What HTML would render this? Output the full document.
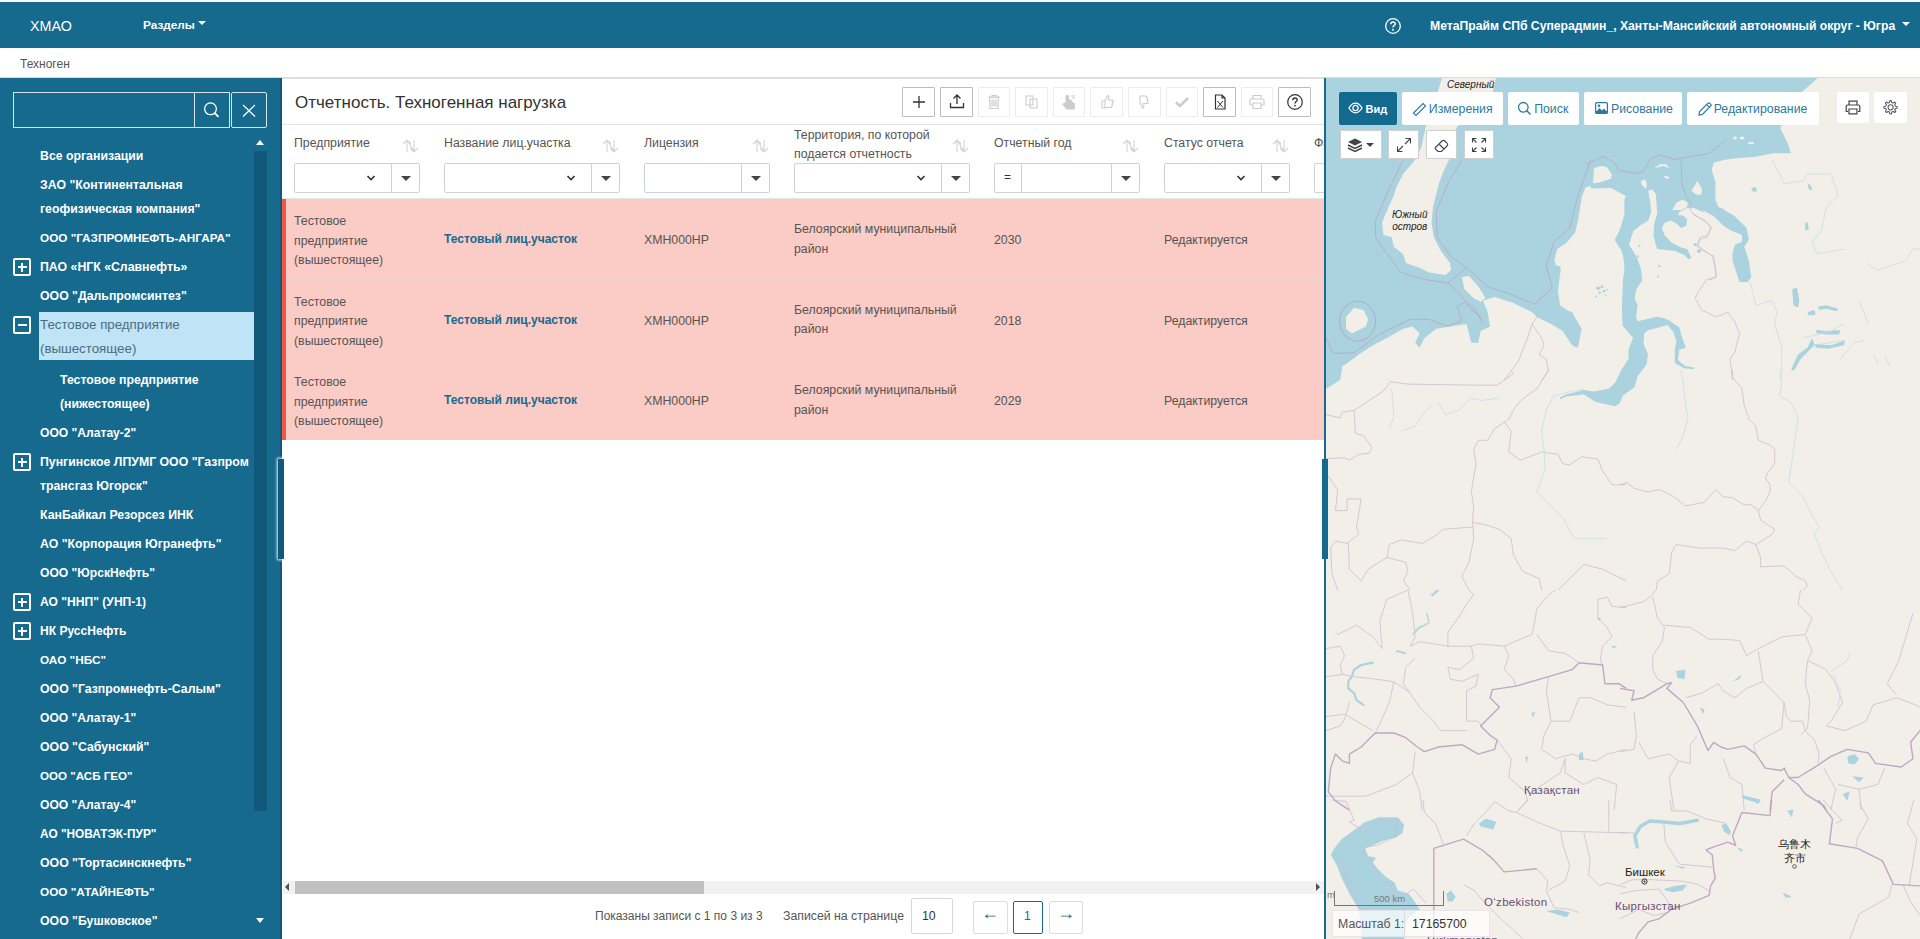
<!DOCTYPE html>
<html><head><meta charset="utf-8">
<style>
*{box-sizing:border-box;margin:0;padding:0}
html,body{width:1920px;height:939px;overflow:hidden;background:#fff;font-family:"Liberation Sans",sans-serif;color:#333}
.abs{position:absolute}
#nav{position:absolute;left:0;top:2px;width:1920px;height:46px;background:#156a8e;color:#fff}
#crumb{position:absolute;left:0;top:48px;width:1920px;height:30px;background:#fff;border-bottom:1px solid #dcdcdc}
#side{position:absolute;left:0;top:78px;width:282px;height:861px;background:#156a8e}
#main{position:absolute;left:282px;top:78px;width:1042px;height:861px;background:#fff;border-top:1px solid #e0e0e0;overflow:hidden}
#vline{position:absolute;left:1324px;top:78px;width:2px;height:861px;background:#156a8e}
#map{position:absolute;left:1326px;top:78px;width:594px;height:861px;background:#f2efe9;overflow:hidden}
.ti{position:absolute;color:#fff;font-weight:700;font-size:12.3px;line-height:24px;white-space:nowrap}
.pm{position:absolute;left:13px;width:18px;height:18px;border:2px solid #fff;border-radius:2px}
.pm:before{content:"";position:absolute;left:2.5px;top:6px;width:9px;height:2px;background:#fff}
.pm.plus:after{content:"";position:absolute;left:6px;top:2.5px;width:2px;height:9px;background:#fff}
</style></head><body>
<div id="nav">
  <div class="abs" style="left:30px;top:16px;font-size:14.3px;line-height:17px">ХМАО</div>
  <div class="abs" style="left:143px;top:16px;font-size:11.8px;font-weight:700;line-height:14px">Разделы</div>
  <div class="abs" style="left:198px;top:19px;width:0;height:0;border-left:4px solid transparent;border-right:4px solid transparent;border-top:4px solid #fff"></div>
  <svg class="abs" style="left:1384px;top:15px" width="18" height="18" viewBox="0 0 18 18"><circle cx="9" cy="9" r="7.3" fill="none" stroke="#fff" stroke-width="1.3"/><path d="M6.8 7.2C6.8 5.8 7.8 5 9 5C10.3 5 11.2 5.8 11.2 6.9C11.2 8.5 9 8.6 9 10.4" stroke="#fff" stroke-width="1.5" fill="none"/><circle cx="9" cy="12.7" r="1" fill="#fff"/></svg>
  <div class="abs" style="left:1430px;top:17px;font-size:12.2px;font-weight:700;line-height:14px;white-space:nowrap">МетаПрайм СПб Суперадмин_, Ханты-Мансийский автономный округ - Югра</div>
  <div class="abs" style="left:1902px;top:20px;width:0;height:0;border-left:4px solid transparent;border-right:4px solid transparent;border-top:4px solid #fff"></div>
</div>
<div id="crumb"><div class="abs" style="left:20px;top:9px;font-size:12px;color:#555">Техноген</div></div>
<div id="side">
<div class="abs" style="left:13px;top:14px;width:182px;height:36px;border:1px solid #d8e4ea;border-right:none"></div>
<div class="abs" style="left:194px;top:14px;width:36px;height:36px;border:1px solid #d8e4ea"></div>
<svg class="abs" style="left:202px;top:22px" width="20" height="20" viewBox="0 0 20 20"><circle cx="8.5" cy="8.8" r="5.9" fill="none" stroke="#fff" stroke-width="1.3"/><line x1="12.6" y1="12.9" x2="16.5" y2="16.8" stroke="#fff" stroke-width="1.8"/></svg>
<div class="abs" style="left:231px;top:14px;width:36px;height:36px;border:1px solid #d8e4ea;border-radius:2px"></div>
<svg class="abs" style="left:239px;top:22px" width="20" height="20" viewBox="0 0 20 20"><path d="M4 5L16 16.5M16 5L4 16.5" stroke="#fff" stroke-width="1.2"/></svg>
<div class="abs" style="left:254px;top:73px;width:13px;height:660px;background:#12587a"></div>
<div class="abs" style="left:256px;top:62px;width:0;height:0;border-left:4px solid transparent;border-right:4px solid transparent;border-bottom:5px solid #fff"></div>
<div class="abs" style="left:256px;top:840px;width:0;height:0;border-left:4px solid transparent;border-right:4px solid transparent;border-top:5px solid #fff"></div>
<div class="abs" style="left:280px;top:0;width:2px;height:861px;background:#11587a"></div>
<div class="ti" style="left:40px;top:66px">Все организации</div>
<div class="ti" style="left:40px;top:95px">ЗАО "Континентальная<br>геофизическая компания"</div>
<div class="ti" style="left:40px;top:148px;font-size:11.74px">ООО "ГАЗПРОМНЕФТЬ-АНГАРА"</div>
<div class="ti" style="left:40px;top:177px">ПАО «НГК «Славнефть»</div>
<div class="pm plus" style="top:180px"></div>
<div class="ti" style="left:40px;top:206px">ООО "Дальпромсинтез"</div>
<div class="abs" style="left:39px;top:234px;width:215px;height:48px;background:#bfe4f5"></div>
<div class="ti" style="left:40px;top:235px;font-weight:400;font-size:13.3px;color:#4d6d80">Тестовое предприятие<br>(вышестоящее)</div>
<div class="pm minus" style="top:238px"></div>
<div class="ti" style="left:60px;top:290px">Тестовое предприятие<br>(нижестоящее)</div>
<div class="ti" style="left:40px;top:343px;font-size:12.1px">ООО "Алатау-2"</div>
<div class="ti" style="left:40px;top:372px">Пунгинское ЛПУМГ ООО "Газпром<br>трансгаз Югорск"</div>
<div class="pm plus" style="top:375px"></div>
<div class="ti" style="left:40px;top:425px">КанБайкал Резорсез ИНК</div>
<div class="ti" style="left:40px;top:454px">АО "Корпорация Югранефть"</div>
<div class="ti" style="left:40px;top:483px;font-size:12.1px">ООО "ЮрскНефть"</div>
<div class="ti" style="left:40px;top:512px;font-size:12.1px">АО "ННП" (УНП-1)</div>
<div class="pm plus" style="top:515px"></div>
<div class="ti" style="left:40px;top:541px;font-size:12.05px">НК РуссНефть</div>
<div class="pm plus" style="top:544px"></div>
<div class="ti" style="left:40px;top:570px;font-size:11.75px">ОАО "НБС"</div>
<div class="ti" style="left:40px;top:599px">ООО "Газпромнефть-Салым"</div>
<div class="ti" style="left:40px;top:628px;font-size:12.1px">ООО "Алатау-1"</div>
<div class="ti" style="left:40px;top:657px">ООО "Сабунский"</div>
<div class="ti" style="left:40px;top:686px;font-size:11.6px">ООО "АСБ ГЕО"</div>
<div class="ti" style="left:40px;top:715px;font-size:12.1px">ООО "Алатау-4"</div>
<div class="ti" style="left:40px;top:744px;font-size:11.85px">АО "НОВАТЭК-ПУР"</div>
<div class="ti" style="left:40px;top:773px">ООО "Тортасинскнефть"</div>
<div class="ti" style="left:40px;top:802px;font-size:11.75px">ООО "АТАЙНЕФТЬ"</div>
<div class="ti" style="left:40px;top:831px">ООО "Бушковское"</div>
</div>
<div id="main">
<div class="abs" style="left:13px;top:14px;font-size:17px;color:#333;white-space:nowrap">Отчетность. Техногенная нагрузка</div>
<div class="abs" style="left:620px;top:8px;width:33px;height:30px;border:1px solid #bdbdbd;border-radius:1px"></div>
<svg class="abs" style="left:626.5px;top:13px" width="20" height="20" viewBox="0 0 20 20"><path d="M10 4V16M4 10H16" stroke="#333" stroke-width="1.3" fill="none"/></svg>
<div class="abs" style="left:658px;top:8px;width:33px;height:30px;border:1px solid #bdbdbd;border-radius:1px"></div>
<svg class="abs" style="left:664.5px;top:13px" width="20" height="20" viewBox="0 0 20 20"><path d="M10 3V12M6.5 6.5L10 3L13.5 6.5M3.5 11V15.5H16.5V11" stroke="#333" stroke-width="1.3" fill="none"/></svg>
<div class="abs" style="left:696px;top:8px;width:32px;height:30px;border:1px solid #ececec;border-radius:1px"></div>
<svg class="abs" style="left:702.0px;top:13px" width="20" height="20" viewBox="0 0 20 20"><path d="M4 5H16M8 5V3.5H12V5M5.5 5.5L6 16.5H14L14.5 5.5Z M8 7.5V14.5M10 7.5V14.5M12 7.5V14.5" stroke="#cccccc" stroke-width="1.2" fill="none"/></svg>
<div class="abs" style="left:733px;top:8px;width:33px;height:30px;border:1px solid #ececec;border-radius:1px"></div>
<svg class="abs" style="left:739.5px;top:13px" width="20" height="20" viewBox="0 0 20 20"><path d="M4 4H11V13H4Z M8 7H15V16H8Z" stroke="#cccccc" stroke-width="1.1" fill="#fff"/></svg>
<div class="abs" style="left:771px;top:8px;width:32px;height:30px;border:1px solid #ececec;border-radius:1px"></div>
<svg class="abs" style="left:777.0px;top:13px" width="20" height="20" viewBox="0 0 20 20"><path d="M7 9V4.5a1.3 1.3 0 0 1 2.6 0V11l1-3 1.5 0.2 0.3 1.5 1.2 0.2 0.4 1.3 1.3 0.3V17H8L4 12.5l1.3-1.5L7 12Z M12 4H16M13 6H16" stroke="#cccccc" stroke-width="1.1" fill="#cccccc"/></svg>
<div class="abs" style="left:808px;top:8px;width:33px;height:30px;border:1px solid #ececec;border-radius:1px"></div>
<svg class="abs" style="left:814.5px;top:13px" width="20" height="20" viewBox="0 0 20 20"><path d="M5 9H8V16H5Z M8 9L10.5 3.5C12 3.5 12.3 5 11.5 8H15.5C16.5 8.3 16.3 9.5 15.5 10C16.3 10.5 16 11.6 15.2 12C15.8 12.5 15.4 13.6 14.8 13.8C15 14.8 14.3 15.5 13.5 15.5H8" stroke="#cccccc" stroke-width="1.1" fill="none"/></svg>
<div class="abs" style="left:846px;top:8px;width:33px;height:30px;border:1px solid #ececec;border-radius:1px"></div>
<svg class="abs" style="left:852.5px;top:13px" width="20" height="20" viewBox="0 0 20 20"><path d="M8 4H13.5C14.3 4 15 4.7 14.8 5.7C15.4 6 15.8 7 15.2 7.5C16 8 16.3 9 15.5 9.5C16.3 10 16.5 11.2 15.5 11.5H11.5C12.3 14.5 12 16 10.5 16L8 10.5Z" stroke="#cccccc" stroke-width="1.1" fill="none" transform="translate(-3 0)"/></svg>
<div class="abs" style="left:884px;top:8px;width:32px;height:30px;border:1px solid #ececec;border-radius:1px"></div>
<svg class="abs" style="left:890.0px;top:13px" width="20" height="20" viewBox="0 0 20 20"><path d="M4 10.5L8 14L16 6" stroke="#cccccc" stroke-width="2.6" fill="none"/></svg>
<div class="abs" style="left:921px;top:8px;width:33px;height:30px;border:1px solid #bdbdbd;border-radius:1px"></div>
<svg class="abs" style="left:927.5px;top:13px" width="20" height="20" viewBox="0 0 20 20"><path d="M5.5 3H12L15 6V17H5.5Z M12 3V6H15" stroke="#333" stroke-width="1.2" fill="none"/><path d="M7.5 9L13 15.5M13 9L7.5 15.5" stroke="#333" stroke-width="1" fill="none"/></svg>
<div class="abs" style="left:959px;top:8px;width:32px;height:30px;border:1px solid #ececec;border-radius:1px"></div>
<svg class="abs" style="left:965.0px;top:13px" width="20" height="20" viewBox="0 0 20 20"><path d="M6 7V3.5H14V7 M4.5 7H15.5C16.5 7 17 7.6 17 8.5V13H14 M6 13H3V8.5C3 7.6 3.5 7 4.5 7 M6 11H14V16.5H6Z" stroke="#cccccc" stroke-width="1.2" fill="none"/></svg>
<div class="abs" style="left:996px;top:8px;width:33px;height:30px;border:1px solid #bdbdbd;border-radius:1px"></div>
<svg class="abs" style="left:1002.5px;top:13px" width="20" height="20" viewBox="0 0 20 20"><circle cx="10" cy="10" r="7.3" stroke="#333" stroke-width="1.2" fill="none"/><path d="M7.8 8.2C7.8 6.8 8.8 6 10 6C11.3 6 12.2 6.8 12.2 7.9C12.2 9.5 10 9.6 10 11.5" stroke="#333" stroke-width="1.4" fill="none"/><circle cx="10" cy="13.6" r="0.9" fill="#333"/></svg>
<div class="abs" style="left:0px;top:45px;width:1042px;height:1px;background:#e3e3e3"></div>
<div class="abs" style="left:12px;top:57px;font-size:12.3px;line-height:14px;color:#555;white-space:nowrap">Предприятие</div>
<div class="abs" style="left:119px;top:60px"><svg width="20" height="14" viewBox="0 0 20 14"><path d="M2 5L6 1L10 5M6 1V13M6.5 1.5L13 12.5M13 1V13M9 9L13 13L17 9" stroke="#d4d4d4" stroke-width="1.1" fill="none"/></svg></div>
<div class="abs" style="left:12px;top:84px;width:126px;height:30px;border:1px solid #d2d2d2;border-radius:2px;background:#fff"></div>
<div class="abs" style="left:109px;top:84px;width:1px;height:30px;background:#d2d2d2"></div>
<div class="abs" style="left:119px;top:97px;width:0;height:0;border-left:5px solid transparent;border-right:5px solid transparent;border-top:5px solid #444"></div>
<svg class="abs" style="left:84px;top:95px" width="10" height="8" viewBox="0 0 10 8"><path d="M1.5 2L5 5.5L8.5 2" stroke="#333" stroke-width="1.6" fill="none"/></svg>
<div class="abs" style="left:162px;top:57px;font-size:12.3px;line-height:14px;color:#555;white-space:nowrap">Название лиц.участка</div>
<div class="abs" style="left:319px;top:60px"><svg width="20" height="14" viewBox="0 0 20 14"><path d="M2 5L6 1L10 5M6 1V13M6.5 1.5L13 12.5M13 1V13M9 9L13 13L17 9" stroke="#d4d4d4" stroke-width="1.1" fill="none"/></svg></div>
<div class="abs" style="left:162px;top:84px;width:176px;height:30px;border:1px solid #d2d2d2;border-radius:2px;background:#fff"></div>
<div class="abs" style="left:309px;top:84px;width:1px;height:30px;background:#d2d2d2"></div>
<div class="abs" style="left:319px;top:97px;width:0;height:0;border-left:5px solid transparent;border-right:5px solid transparent;border-top:5px solid #444"></div>
<svg class="abs" style="left:284px;top:95px" width="10" height="8" viewBox="0 0 10 8"><path d="M1.5 2L5 5.5L8.5 2" stroke="#333" stroke-width="1.6" fill="none"/></svg>
<div class="abs" style="left:362px;top:57px;font-size:12.3px;line-height:14px;color:#555;white-space:nowrap">Лицензия</div>
<div class="abs" style="left:469px;top:60px"><svg width="20" height="14" viewBox="0 0 20 14"><path d="M2 5L6 1L10 5M6 1V13M6.5 1.5L13 12.5M13 1V13M9 9L13 13L17 9" stroke="#d4d4d4" stroke-width="1.1" fill="none"/></svg></div>
<div class="abs" style="left:362px;top:84px;width:126px;height:30px;border:1px solid #cdd3d8;border-radius:2px;background:#fff"></div>
<div class="abs" style="left:459px;top:84px;width:1px;height:30px;background:#d2d2d2"></div>
<div class="abs" style="left:469px;top:97px;width:0;height:0;border-left:5px solid transparent;border-right:5px solid transparent;border-top:5px solid #444"></div>
<div class="abs" style="left:512px;top:47px;font-size:12.3px;line-height:18.5px;color:#555;white-space:nowrap">Территория, по которой<br>подается отчетность</div>
<div class="abs" style="left:669px;top:60px"><svg width="20" height="14" viewBox="0 0 20 14"><path d="M2 5L6 1L10 5M6 1V13M6.5 1.5L13 12.5M13 1V13M9 9L13 13L17 9" stroke="#d4d4d4" stroke-width="1.1" fill="none"/></svg></div>
<div class="abs" style="left:512px;top:84px;width:176px;height:30px;border:1px solid #d2d2d2;border-radius:2px;background:#fff"></div>
<div class="abs" style="left:659px;top:84px;width:1px;height:30px;background:#d2d2d2"></div>
<div class="abs" style="left:669px;top:97px;width:0;height:0;border-left:5px solid transparent;border-right:5px solid transparent;border-top:5px solid #444"></div>
<svg class="abs" style="left:634px;top:95px" width="10" height="8" viewBox="0 0 10 8"><path d="M1.5 2L5 5.5L8.5 2" stroke="#333" stroke-width="1.6" fill="none"/></svg>
<div class="abs" style="left:712px;top:57px;font-size:12.3px;line-height:14px;color:#555;white-space:nowrap">Отчетный год</div>
<div class="abs" style="left:839px;top:60px"><svg width="20" height="14" viewBox="0 0 20 14"><path d="M2 5L6 1L10 5M6 1V13M6.5 1.5L13 12.5M13 1V13M9 9L13 13L17 9" stroke="#d4d4d4" stroke-width="1.1" fill="none"/></svg></div>
<div class="abs" style="left:712px;top:84px;width:146px;height:30px;border:1px solid #d2d2d2;border-radius:2px;background:#fff"></div>
<div class="abs" style="left:829px;top:84px;width:1px;height:30px;background:#d2d2d2"></div>
<div class="abs" style="left:839px;top:97px;width:0;height:0;border-left:5px solid transparent;border-right:5px solid transparent;border-top:5px solid #444"></div>
<div class="abs" style="left:739px;top:84px;width:1px;height:30px;background:#d2d2d2"></div>
<div class="abs" style="left:722px;top:91px;font-size:12px;color:#333">=</div>
<div class="abs" style="left:882px;top:57px;font-size:12.3px;line-height:14px;color:#555;white-space:nowrap">Статус отчета</div>
<div class="abs" style="left:989px;top:60px"><svg width="20" height="14" viewBox="0 0 20 14"><path d="M2 5L6 1L10 5M6 1V13M6.5 1.5L13 12.5M13 1V13M9 9L13 13L17 9" stroke="#d4d4d4" stroke-width="1.1" fill="none"/></svg></div>
<div class="abs" style="left:882px;top:84px;width:126px;height:30px;border:1px solid #d2d2d2;border-radius:2px;background:#fff"></div>
<div class="abs" style="left:979px;top:84px;width:1px;height:30px;background:#d2d2d2"></div>
<div class="abs" style="left:989px;top:97px;width:0;height:0;border-left:5px solid transparent;border-right:5px solid transparent;border-top:5px solid #444"></div>
<svg class="abs" style="left:954px;top:95px" width="10" height="8" viewBox="0 0 10 8"><path d="M1.5 2L5 5.5L8.5 2" stroke="#333" stroke-width="1.6" fill="none"/></svg>
<div class="abs" style="left:1032px;top:57px;font-size:12.3px;line-height:14px;color:#555;white-space:nowrap">Фа</div>
<div class="abs" style="left:1139px;top:60px"><svg width="20" height="14" viewBox="0 0 20 14"><path d="M2 5L6 1L10 5M6 1V13M6.5 1.5L13 12.5M13 1V13M9 9L13 13L17 9" stroke="#d4d4d4" stroke-width="1.1" fill="none"/></svg></div>
<div class="abs" style="left:1032px;top:84px;width:126px;height:30px;border:1px solid #d2d2d2;border-radius:2px;background:#fff"></div>
<div class="abs" style="left:1129px;top:84px;width:1px;height:30px;background:#d2d2d2"></div>
<div class="abs" style="left:1139px;top:97px;width:0;height:0;border-left:5px solid transparent;border-right:5px solid transparent;border-top:5px solid #444"></div>
<svg class="abs" style="left:1104px;top:95px" width="10" height="8" viewBox="0 0 10 8"><path d="M1.5 2L5 5.5L8.5 2" stroke="#333" stroke-width="1.6" fill="none"/></svg>
<div class="abs" style="left:0px;top:120px;width:1042px;height:80px;background:#fbcbc5"></div>
<div class="abs" style="left:0px;top:120px;width:4px;height:80px;background:#f0574a"></div>
<div class="abs" style="left:4px;top:199px;width:1038px;height:1px;background:#e9d6d4"></div>
<div class="abs" style="left:12px;top:133px;font-size:12.3px;line-height:19.7px;color:#555;white-space:nowrap">Тестовое<br>предприятие<br>(вышестоящее)</div>
<div class="abs" style="left:162px;top:152px;font-size:12px;font-weight:700;line-height:16px;color:#176a8f;white-space:nowrap">Тестовый лиц.участок</div>
<div class="abs" style="left:362px;top:153px;font-size:12.3px;line-height:16px;color:#555;white-space:nowrap">ХМН000НР</div>
<div class="abs" style="left:512px;top:141px;font-size:12.3px;line-height:19.7px;color:#555;white-space:nowrap">Белоярский муниципальный<br>район</div>
<div class="abs" style="left:712px;top:153px;font-size:12.3px;line-height:16px;color:#555;white-space:nowrap">2030</div>
<div class="abs" style="left:882px;top:153px;font-size:12.3px;line-height:16px;color:#555;white-space:nowrap">Редактируется</div>
<div class="abs" style="left:0px;top:200px;width:1042px;height:81px;background:#fbcbc5"></div>
<div class="abs" style="left:0px;top:200px;width:4px;height:81px;background:#f0574a"></div>
<div class="abs" style="left:4px;top:280px;width:1038px;height:1px;background:#e9d6d4"></div>
<div class="abs" style="left:12px;top:213.5px;font-size:12.3px;line-height:19.7px;color:#555;white-space:nowrap">Тестовое<br>предприятие<br>(вышестоящее)</div>
<div class="abs" style="left:162px;top:232.5px;font-size:12px;font-weight:700;line-height:16px;color:#176a8f;white-space:nowrap">Тестовый лиц.участок</div>
<div class="abs" style="left:362px;top:233.5px;font-size:12.3px;line-height:16px;color:#555;white-space:nowrap">ХМН000НР</div>
<div class="abs" style="left:512px;top:221.5px;font-size:12.3px;line-height:19.7px;color:#555;white-space:nowrap">Белоярский муниципальный<br>район</div>
<div class="abs" style="left:712px;top:233.5px;font-size:12.3px;line-height:16px;color:#555;white-space:nowrap">2018</div>
<div class="abs" style="left:882px;top:233.5px;font-size:12.3px;line-height:16px;color:#555;white-space:nowrap">Редактируется</div>
<div class="abs" style="left:0px;top:281px;width:1042px;height:80px;background:#fbcbc5"></div>
<div class="abs" style="left:0px;top:281px;width:4px;height:80px;background:#f0574a"></div>
<div class="abs" style="left:4px;top:360px;width:1038px;height:1px;background:#e9d6d4"></div>
<div class="abs" style="left:12px;top:294px;font-size:12.3px;line-height:19.7px;color:#555;white-space:nowrap">Тестовое<br>предприятие<br>(вышестоящее)</div>
<div class="abs" style="left:162px;top:313px;font-size:12px;font-weight:700;line-height:16px;color:#176a8f;white-space:nowrap">Тестовый лиц.участок</div>
<div class="abs" style="left:362px;top:314px;font-size:12.3px;line-height:16px;color:#555;white-space:nowrap">ХМН000НР</div>
<div class="abs" style="left:512px;top:302px;font-size:12.3px;line-height:19.7px;color:#555;white-space:nowrap">Белоярский муниципальный<br>район</div>
<div class="abs" style="left:712px;top:314px;font-size:12.3px;line-height:16px;color:#555;white-space:nowrap">2029</div>
<div class="abs" style="left:882px;top:314px;font-size:12.3px;line-height:16px;color:#555;white-space:nowrap">Редактируется</div>
<div class="abs" style="left:0px;top:119px;width:1042px;height:1px;background:#e6e6e6"></div>
<div class="abs" style="left:1px;top:802px;width:1041px;height:13px;background:#f1f1f1"></div>
<div class="abs" style="left:13px;top:802px;width:409px;height:13px;background:#c1c1c1"></div>
<div class="abs" style="left:3px;top:804px;width:0;height:0;border-top:4px solid transparent;border-bottom:4px solid transparent;border-right:4px solid #505050"></div>
<div class="abs" style="left:1034px;top:804px;width:0;height:0;border-top:4px solid transparent;border-bottom:4px solid transparent;border-left:4px solid #505050"></div>
<div class="abs" style="left:313px;top:829px;font-size:12px;line-height:16px;color:#555;white-space:nowrap">Показаны записи с 1 по 3 из 3</div>
<div class="abs" style="left:501px;top:829px;font-size:12.3px;line-height:16px;color:#555;white-space:nowrap">Записей на странице</div>
<div class="abs" style="left:629px;top:819px;width:42px;height:36px;border:1px solid #d8d8d8;border-radius:2px"></div>
<div class="abs" style="left:640px;top:829px;font-size:12.3px;line-height:16px;color:#333">10</div>
<div class="abs" style="left:691px;top:822px;width:35px;height:33px;border:1px solid #dedede;border-radius:2px"></div>
<div class="abs" style="left:699px;top:826px;font-size:18px;line-height:16px;color:#1a6a8e">←</div>
<div class="abs" style="left:731px;top:822px;width:30px;height:33px;border:1px solid #1a6a8e;border-radius:2px"></div>
<div class="abs" style="left:742px;top:829px;font-size:12px;line-height:16px;color:#1a6a8e">1</div>
<div class="abs" style="left:767px;top:822px;width:34px;height:33px;border:1px solid #dedede;border-radius:2px"></div>
<div class="abs" style="left:775px;top:826px;font-size:18px;line-height:16px;color:#1a6a8e">→</div>
</div>
<div id="vline"></div>
<div class="abs" style="left:278px;top:459px;width:6px;height:100px;background:#12587a;box-shadow:0 0 3px 1px rgba(255,255,255,0.9);z-index:5"></div>
<div class="abs" style="left:1322px;top:459px;width:6px;height:100px;background:#156a8e;z-index:5"></div>
<div id="map"><svg width="594" height="861" viewBox="0 0 594 861" style="position:absolute;left:0;top:0"><path d="M0.0 0.0 L491.8 0.0 L475.7 14.3 L454.2 50.1 L461.4 64.4 L465.0 75.2 L447.1 75.2 L429.2 78.7 L407.7 80.5 L400.0 81.4 L387.9 84.4 L385.7 91.8 L389.4 103.8 L389.4 121.7 L392.4 129.1 L400.0 132.1 L397.1 131.2 L408.8 138.2 L420.6 150.0 L422.9 161.7 L418.2 168.7 L422.9 182.8 L425.2 199.2 L421.7 203.9 L413.5 203.9 L406.5 182.8 L406.5 175.7 L408.8 166.4 L415.9 164.0 L415.9 157.0 L404.2 152.3 L397.1 147.6 L387.7 138.2 L376.0 131.7 L386.4 142.5 L379.0 135.1 L368.5 130.3 L361.1 129.9 L353.6 133.6 L352.1 137.3 L356.6 137.3 L361.1 141.0 L360.3 147.8 L355.1 150.0 L350.6 145.5 L344.7 142.5 L338.7 144.8 L335.7 150.0 L338.7 157.5 L346.2 164.9 L355.1 169.4 L361.1 170.9 L365.5 179.8 L362.6 181.3 L358.1 176.8 L349.1 173.1 L331.2 170.9 L329.8 166.4 L327.5 157.5 L328.3 145.5 L331.2 135.1 L330.5 124.6 L329.8 115.7 L326.0 111.2 L322.3 112.7 L323.8 121.7 L325.3 133.6 L322.3 142.5 L314.8 147.0 L307.4 153.0 L302.9 166.4 L310.4 178.3 L314.8 190.3 L316.3 202.0 L310.1 212.0 L308.6 220.9 L311.6 226.9 L310.1 238.8 L311.6 243.3 L330.9 238.8 L338.4 240.3 L344.4 243.3 L353.3 249.3 L354.8 255.3 L357.8 264.2 L360.0 269.4 L353.3 271.7 L351.8 282.1 L359.3 288.1 L368.2 289.6 L368.2 291.3 L357.8 290.3 L348.8 285.1 L348.8 271.7 L350.3 262.7 L347.3 253.8 L341.4 247.0 L330.9 250.0 L322.0 252.3 L318.3 255.3 L317.5 265.7 L322.0 276.1 L320.5 286.6 L311.6 298.5 L308.6 308.9 L296.6 317.9 L293.7 325.3 L289.2 328.3 L269.8 323.9 L257.9 316.4 L240.0 318.6 L234.0 321.6 L234.0 319.4 L240.0 316.4 L257.9 311.9 L268.3 313.4 L283.2 310.4 L289.2 304.5 L295.1 292.5 L302.6 280.6 L302.6 271.7 L307.1 259.7 L296.6 247.8 L295.9 229.9 L296.6 212.0 L296.9 202.0 L298.4 191.8 L297.7 181.3 L295.5 172.4 L288.7 161.9 L294.0 151.5 L298.4 136.6 L298.4 121.7 L299.9 117.9 L285.0 110.0 L265.6 110.5 L264.1 108.2 L259.7 109.0 L255.9 118.7 L252.2 141.0 L249.2 154.5 L240.3 164.9 L231.3 170.9 L228.3 181.3 L229.8 187.3 L234.3 188.8 L235.8 202.0 L234.4 192.2 L232.0 213.2 L234.4 229.7 L246.1 234.3 L255.5 250.7 L250.8 269.5 L246.1 267.2 L236.7 253.1 L225.0 246.1 L210.9 239.0 L206.2 234.3 L187.5 225.0 L168.7 219.1 L157.0 222.6 L161.7 234.3 L164.1 248.4 L154.7 253.1 L152.3 264.8 L145.3 264.8 L143.0 255.4 L140.6 246.1 L124.2 248.4 L110.2 250.7 L98.4 260.1 L93.7 269.5 L89.1 264.8 L93.7 255.4 L86.7 248.4 L77.3 250.7 L60.9 260.1 L46.9 267.2 L32.8 276.5 L23.4 283.6 L16.4 288.2 L14.1 302.1 L0.0 311.0Z" fill="#aad3df" /><path d="M234.4 227.3 L243.7 234.3 L255.5 250.7 L252.0 269.5 L247.3 267.2 L239.1 253.1 L232.0 243.7Z" fill="#aad3df" /><path d="M116.0 0.0 L170.0 0.0 L167.0 13.0 L150.0 30.0 L130.0 50.0 L124.0 80.0 L118.0 92.0 L113.0 105.0 L107.0 129.0 L105.5 145.0 L107.8 159.0 L115.0 173.0 L124.0 185.0 L125.0 192.0 L119.5 197.0 L103.0 194.5 L94.0 190.0 L80.0 185.0 L77.0 176.0 L68.0 169.0 L65.6 159.0 L57.4 157.0 L56.2 145.0 L58.6 138.0 L68.0 117.0 L70.0 110.0 L77.0 96.0 L89.0 82.0 L95.0 70.0 L100.0 48.0 L110.0 20.0Z" fill="#f2efe9" /><path d="M136.0 199.0 L143.0 198.0 L152.3 208.6 L159.4 220.0 L154.7 223.8 L147.7 220.3 L138.3 211.0Z" fill="#f2efe9" /><path d="M28.0 229.7 L37.5 232.0 L42.2 241.4 L39.8 248.4 L25.8 255.4 L20.0 250.7 L20.0 239.0Z" fill="#f2efe9" /><path d="M267.9 90.3 L274.6 88.1 L280.5 88.8 L285.8 96.3 L285.0 100.8 L273.1 104.5 L267.1 105.3Z" fill="#f2efe9" /><path d="M346.2 132.1 L350.6 124.6 L356.6 121.7 L361.8 124.6 L361.1 129.1 L355.1 132.1Z" fill="#f2efe9" /><path d="M371.5 103.0 L376.0 111.2 L375.2 116.9 L370.0 116.4 L365.5 112.7Z" fill="#f2efe9" /><path d="M314.8 103.0 L319.3 101.5 L320.8 106.7 L320.1 111.2 L315.6 106.7Z" fill="#f2efe9" /><path d="M328.3 90.3 L334.2 85.9 L340.2 86.6 L343.9 90.3 L337.2 88.1 L331.2 89.6Z" fill="#f2efe9" /><path d="M337.2 98.5 L340.2 97.8 L343.9 100.0 L340.9 101.1Z" fill="#f2efe9" /><ellipse cx="409" cy="60" rx="2.0" ry="1.5" fill="#f2efe9"/><ellipse cx="416" cy="60" rx="2.5" ry="1.5" fill="#f2efe9"/><ellipse cx="425" cy="65" rx="3.0" ry="1.25" fill="#f2efe9"/><path d="M4.7 776.7 L9.4 768.9 L15.6 761.1 L26.6 753.2 L39.1 743.9 L53.1 739.2 L71.9 739.2 L78.1 747.0 L76.6 754.8 L70.3 759.5 L57.8 762.6 L46.9 767.3 L39.1 770.4 L42.2 778.2 L50.0 779.8 L46.9 784.5 L51.6 790.8 L59.4 798.6 L68.8 804.8 L71.9 812.6 L82.8 815.8 L87.5 822.0 L93.8 831.4 L87.5 836.1 L81.2 840.8 L78.1 861.1 L35.9 861.1 L32.8 831.4 L23.4 815.8 L15.6 800.1 L10.9 787.6Z" fill="#aad3df" /><path d="M120.3 815.8 L125.0 812.6 L129.7 818.9 L126.6 823.6 L121.9 823.6Z" fill="#aad3df" /><path d="M153.1 745.4 L159.4 740.8 L165.6 742.3 L170.3 743.9 L167.2 751.7 L160.9 750.1 L154.7 748.6Z" fill="#aad3df" /><path d="M220.3 832.9 L231.2 831.4 L243.8 834.5 L240.6 839.2 L229.7 836.1Z" fill="#aad3df" /><path d="M311.2 768.9 L308.8 757.9 L314.3 748.6 L323.7 743.1 L337.8 743.9 L353.4 745.4 L362.8 743.9 L371.3 742.3" fill="none" stroke="#aad3df" stroke-width="3.5" stroke-linejoin="round" stroke-linecap="round"/><path d="M395.6 747.0 L400.2 745.4 L404.9 753.2 L403.4 757.2 L397.9 753.2Z" fill="#aad3df" /><path d="M337.8 811.1 L348.7 807.9 L361.2 806.4 L356.5 812.6 L347.1 814.2 L339.3 812.6Z" fill="#aad3df" /><path d="M461.2 732.9 L467.4 731.4 L465.9 739.2Z" fill="#aad3df" /><path d="M456.5 814.2 L465.9 818.9 L459.6 819.7Z" fill="#aad3df" /><path d="M347.1 787.6 L359.6 789.2 L356.5 790.8Z" fill="#aad3df" /><path d="M411.2 768.9 L417.4 772.0 L414.3 773.6Z" fill="#aad3df" /><path d="M426.8 722.0 L434.6 723.6 L431.5 725.9Z" fill="#aad3df" /><path d="M350.2 592.9 L359.6 591.7 L358.5 601.1 L351.4 599.9Z" fill="#aad3df" /><path d="M406.5 603.4 L415.9 596.4 L413.5 601.1Z" fill="#aad3df" /><path d="M521.3 678.4 L528.4 676.1 L533.1 680.7 L528.4 686.6 L522.5 685.4Z" fill="#aad3df" /><path d="M526.0 698.3 L537.7 699.5 L533.1 704.2Z" fill="#aad3df" /><path d="M415.9 717.1 L434.6 721.8 L432.3 725.3 L417.0 720.6Z" fill="#aad3df" /><path d="M373.7 629.2 L378.4 631.5 L377.2 636.2Z" fill="#aad3df" /><path d="M516.7 715.9 L523.7 713.6 L521.3 722.9Z" fill="#aad3df" /><path d="M466.3 210.9 L471.0 209.7 L473.3 222.6 L472.1 229.7 L467.4 227.3Z" fill="#aad3df" /><path d="M481.5 234.3 L488.5 232.0 L489.7 236.7 L482.7 237.2Z" fill="#aad3df" /><path d="M492.0 228.5 L500.2 227.3 L512.0 230.8 L510.8 233.2 L500.2 230.8 L493.2 232.0Z" fill="#aad3df" /><path d="M489.7 251.9 L500.2 253.1 L514.3 251.9 L513.1 256.6 L500.2 256.6 L490.9 255.4Z" fill="#aad3df" /><path d="M488.5 266.0 L504.9 267.2 L519.0 262.5 L517.8 267.2 L502.6 270.7 L489.7 269.5Z" fill="#aad3df" /><path d="M486.2 260.1 L481.5 269.5 L472.1 276.5 L467.4 285.9 L465.1 292.9 L468.6 291.8 L474.5 281.2 L483.8 271.8 L488.5 267.2Z" fill="#aad3df" /><path d="M425.2 110.1 L429.9 109.0 L431.1 113.6 L426.4 113.6Z" fill="#aad3df" /><path d="M479.2 145.3 L481.5 144.1 L482.7 152.3 L479.2 152.3Z" fill="#aad3df" /><path d="M481.5 105.4 L485.0 107.8 L486.2 112.5 L482.7 111.3Z" fill="#aad3df" /><ellipse cx="369.3" cy="166.4" rx="1.8" ry="1.5" fill="#aad3df"/><ellipse cx="373.0" cy="173.1" rx="2.2" ry="1.8" fill="#aad3df"/><ellipse cx="333.5" cy="188.0" rx="1.2" ry="0.9" fill="#aad3df"/><ellipse cx="332.0" cy="198.5" rx="1.0" ry="1.0" fill="#aad3df"/><ellipse cx="313.3" cy="167.9" rx="1.2" ry="0.9" fill="#aad3df"/><ellipse cx="311.9" cy="178.3" rx="0.9" ry="1.2" fill="#aad3df"/><circle cx="272.2" cy="210.3" r="1.8" fill="#aad3df"/><circle cx="275.9" cy="208.8" r="1.5" fill="#aad3df"/><circle cx="278.2" cy="213.2" r="1.3" fill="#aad3df"/><circle cx="273.7" cy="214.7" r="1.2" fill="#aad3df"/><circle cx="270.0" cy="218.5" r="1.0" fill="#aad3df"/><circle cx="279.7" cy="217.7" r="0.9" fill="#aad3df"/><circle cx="281.1" cy="211.8" r="0.9" fill="#aad3df"/><path d="M46.9 584.7 L35.2 587.0 L28.1 591.7 L25.8 598.7 L22.3 603.4 L22.3 610.4 L28.1 615.1 L30.5 622.2 L37.5 626.8" fill="none" stroke="#aad3df" stroke-width="2.2" stroke-linejoin="round" stroke-linecap="round"/><path d="M70.3 572.9 L79.7 575.3" fill="none" stroke="#aad3df" stroke-width="1.8" stroke-linejoin="round" /><path d="M100.8 535.4 L103.1 544.8 L93.7 549.5 L86.7 556.5" fill="none" stroke="#aad3df" stroke-width="1.5" stroke-linejoin="round" /><path d="M105.5 517.9 L112.5 512.0" fill="none" stroke="#aad3df" stroke-width="2" stroke-linejoin="round" /><path d="M253.1 676.1 L256.6 673.7 L257.8 681.9 L253.1 681.9Z" fill="#aad3df" /><path d="M205.1 635.0 L209.1 633.9 L207.4 639.7Z" fill="#aad3df" /><path d="M199.2 678.9 L202.0 678.4 L200.4 685.4Z" fill="#aad3df" /><path d="M270.7 540.1 L275.4 539.7 L273.0 542.5Z" fill="#aad3df" /><path d="M284.8 568.2 L290.6 567.8 L288.3 570.6Z" fill="#aad3df" /><ellipse cx="31.6" cy="243.2" rx="18" ry="20" fill="none" stroke="#b7a4c2" stroke-width="0.9"/><path d="M77.3 82.0 L65.6 105.4 L49.2 142.9 L49.7 159.3 L60.9 175.7 L75.0 194.5 L98.4 201.5 L121.9 205.0 L131.2 213.2 L140.6 225.0 L145.3 232.0 L152.3 236.7 L157.0 246.1" fill="none" stroke="#bba9c4" stroke-width="0.9" stroke-linejoin="round" /><path d="M135.9 82.0 L121.9 105.4 L110.2 133.6 L111.3 159.3 L124.2 178.1 L140.6 189.8 L161.7 208.6 L182.8 215.6 L208.6 226.1 L226.2 209.7 L220.3 187.5 L228.5 162.9 L243.7 150.0 L252.0 117.2 L264.8 82.0" fill="none" stroke="#bba9c4" stroke-width="0.9" stroke-linejoin="round" /><path d="M140.6 189.8 L121.9 205.0" fill="none" stroke="#bba9c4" stroke-width="0.9" stroke-linejoin="round" /><path d="M0.0 260.1 L7.0 275.4 L28.1 274.7 L53.9 255.9 L84.4 241.4 L103.1 241.4 L121.9 248.4 L135.9 242.5 L131.2 228.5 L139.5 223.8 L147.7 229.7 L154.7 241.4" fill="none" stroke="#bba9c4" stroke-width="0.9" stroke-linejoin="round" /><path d="M261.1 85.9 L277.6 78.4 L289.5 85.9 L292.5 92.6 L311.1 95.6 L317.8 93.3 L323.8 81.4 L334.2 76.9 L347.7 81.4 L383.4 75.4 L400.0 62.0" fill="none" stroke="#bba9c4" stroke-width="0.9" stroke-linejoin="round" /><path d="M355.1 81.4 L355.9 105.3 L359.6 117.2 L365.5 126.1" fill="none" stroke="#bba9c4" stroke-width="0.9" stroke-linejoin="round" /><path d="M210.9 239.0 L206.2 246.1 L215.6 260.1 L218.0 267.2 L213.3 276.5 L220.3 281.2 L222.7 292.9 L215.6 302.1" fill="none" stroke="#cdbcd1" stroke-width="0.8" stroke-linejoin="round" /><path d="M206.2 246.1 L201.6 260.1 L192.2 283.6 L178.1 302.1" fill="none" stroke="#cdbcd1" stroke-width="0.8" stroke-linejoin="round" /><path d="M365.5 126.1 L364.1 132.1 L370.0 138.1 L379.0 142.5 L384.9 148.5 L382.0 157.5 L374.5 158.9 L371.5 166.4 L376.0 170.9 L386.4 178.3 L389.4 188.8 L390.2 199.2 L383.4 202.0" fill="none" stroke="#cdbcd1" stroke-width="0.8" stroke-linejoin="round" /><path d="M366.7 135.9 L378.4 142.9 L385.4 150.0 L380.7 159.3 L373.7 161.7 L371.3 168.7 L378.4 173.4 L387.7 178.1 L390.1 199.2 L380.7 201.5 L371.3 215.6 L369.0 220.3 L376.0 232.0 L390.1 239.0 L401.8 234.3 L408.8 243.7 L413.5 255.4 L408.8 274.2 L404.2 281.2 L406.5 302.1" fill="none" stroke="#cdbcd1" stroke-width="0.8" stroke-linejoin="round" /><path d="M0.0 336.5 L14.1 340.0 L16.4 334.2 L28.1 332.3 L57.4 313.1 L64.5 303.7 L82.0 306.1 L152.3 307.2 L171.1 307.2 L187.5 295.5 L185.2 292.0" fill="none" stroke="#cdbcd1" stroke-width="0.8" stroke-linejoin="round" /><path d="M28.1 332.3 L29.3 355.3 L37.5 357.6 L45.7 369.3 L43.4 375.2 L32.8 376.4 L23.4 382.2 L18.7 379.9 L0.0 380.6" fill="none" stroke="#cdbcd1" stroke-width="0.8" stroke-linejoin="round" /><path d="M222.7 292.0 L210.9 310.7 L194.5 322.5 L187.5 331.8 L182.8 341.2 L168.7 350.6 L161.7 362.3 L152.3 362.3 L147.7 371.7 L150.0 385.7 L145.3 413.9 L147.7 427.9 L146.5 444.3 L147.7 460.7 L143.0 484.2 L135.9 498.2 L143.0 512.1" fill="none" stroke="#cdbcd1" stroke-width="0.8" stroke-linejoin="round" /><path d="M178.1 343.6 L185.2 352.9 L182.8 374.0 L194.5 382.2 L215.6 374.0 L232.0 376.4 L236.7 385.7 L243.7 386.9 L255.5 378.7 L271.9 381.1 L276.6 392.8 L285.9 406.8 L300.0 406.8" fill="none" stroke="#cdbcd1" stroke-width="0.8" stroke-linejoin="round" /><path d="M146.5 444.3 L159.4 446.7 L173.4 451.4 L185.2 460.7 L187.5 477.2 L196.9 493.6 L213.3 500.6 L215.6 512.1" fill="none" stroke="#cdbcd1" stroke-width="0.8" stroke-linejoin="round" /><path d="M146.5 449.0 L117.2 451.4 L110.2 457.2 L96.1 465.4 L75.0 461.9 L63.3 466.6 L60.9 479.5 L79.7 484.2 L82.0 493.6 L77.3 502.9 L84.4 512.1" fill="none" stroke="#cdbcd1" stroke-width="0.8" stroke-linejoin="round" /><path d="M60.9 479.5 L42.2 491.2 L35.2 502.9 L23.4 491.2 L22.3 465.4 L9.4 463.1 L4.7 470.1 L5.9 495.9 L11.7 512.1" fill="none" stroke="#cdbcd1" stroke-width="0.8" stroke-linejoin="round" /><path d="M0.0 395.1 L11.7 411.5 L9.4 432.6 L21.1 432.6 L21.1 420.9 L35.2 420.9 L30.5 449.0 L32.8 456.1 L21.1 465.4" fill="none" stroke="#cdbcd1" stroke-width="0.8" stroke-linejoin="round" /><path d="M232.0 512.1 L257.8 486.5 L276.6 491.2 L300.0 502.9" fill="none" stroke="#cdbcd1" stroke-width="0.8" stroke-linejoin="round" /><path d="M406.5 292.0 L406.5 299.0 L415.9 310.7 L418.2 327.2 L422.9 341.2 L429.9 348.2 L432.3 362.3 L444.0 367.0 L448.7 371.7 L448.7 385.7 L441.7 395.1 L439.3 399.8 L444.0 406.8 L444.0 413.9 L439.3 423.2 L432.3 432.6 L434.6 442.0 L448.7 451.4 L446.3 456.1 L429.9 466.6 L420.6 463.1 L408.8 472.5 L397.1 470.1 L373.7 470.1 L350.2 466.6 L345.6 474.8 L343.2 495.9 L331.5 502.9 L330.3 512.1" fill="none" stroke="#cdbcd1" stroke-width="0.8" stroke-linejoin="round" /><path d="M294.0 406.8 L301.0 404.5 L308.1 410.4 L322.1 413.9 L333.8 411.5 L347.9 418.6 L359.6 427.9 L378.4 424.4 L390.1 411.5 L397.1 418.6 L406.5 419.7 L418.2 426.8 L425.2 426.8 L432.3 432.6" fill="none" stroke="#cdbcd1" stroke-width="0.8" stroke-linejoin="round" /><path d="M429.9 466.6 L434.6 479.5 L434.6 488.9 L458.1 487.7 L469.8 498.2 L479.2 502.9 L481.5 507.6 L476.8 512.1" fill="none" stroke="#cdbcd1" stroke-width="0.8" stroke-linejoin="round" /><path d="M82.0 512.0 L86.7 535.4 L89.1 558.9 L84.4 568.2 L93.7 563.6 L121.9 568.2 L145.3 568.2 L152.3 565.9 L178.1 568.2 L194.5 561.2 L206.2 556.5 L210.9 530.7 L222.7 516.7 L229.7 512.0" fill="none" stroke="#cdbcd1" stroke-width="0.8" stroke-linejoin="round" /><path d="M121.9 568.2 L121.9 554.2 L133.6 537.8 L140.6 526.1 L147.7 516.7 L143.0 512.0" fill="none" stroke="#cdbcd1" stroke-width="0.8" stroke-linejoin="round" /><path d="M145.3 568.2 L147.7 580.0 L133.6 591.7 L121.9 589.3 L124.2 601.1 L135.9 603.4 L152.3 596.4 L150.0 608.1 L140.6 612.8 L140.6 643.2 L152.3 643.2 L157.0 650.3" fill="none" stroke="#cdbcd1" stroke-width="0.8" stroke-linejoin="round" /><path d="M178.1 568.2 L182.8 577.6 L178.1 591.7 L187.5 601.1 L189.8 608.1" fill="none" stroke="#cdbcd1" stroke-width="0.8" stroke-linejoin="round" /><path d="M210.9 556.5 L222.7 572.9 L239.1 575.3 L253.1 584.7" fill="none" stroke="#cdbcd1" stroke-width="0.8" stroke-linejoin="round" /><path d="M271.9 521.4 L281.2 519.0 L285.9 528.4 L300.0 529.6" fill="none" stroke="#cdbcd1" stroke-width="0.8" stroke-linejoin="round" /><path d="M271.9 521.4 L271.9 540.1 L281.2 549.5 L285.9 558.9 L276.6 568.2 L274.2 582.3 L276.6 587.0" fill="none" stroke="#cdbcd1" stroke-width="0.8" stroke-linejoin="round" /><path d="M222.7 598.7 L220.3 612.8 L225.0 643.2 L218.0 657.3 L215.6 671.4 L229.7 680.7 L246.1 676.1 L257.8 680.7 L269.5 683.1 L281.2 676.1 L300.0 671.4" fill="none" stroke="#cdbcd1" stroke-width="0.8" stroke-linejoin="round" /><path d="M225.0 643.2 L243.7 643.2 L253.1 619.8 L264.8 619.8 L281.2 626.8 L300.0 629.2" fill="none" stroke="#cdbcd1" stroke-width="0.8" stroke-linejoin="round" /><path d="M82.0 512.0 L60.9 521.4 L53.9 542.5 L56.2 570.6 L46.9 558.9 L30.5 547.2 L11.7 556.5 L9.4 554.2" fill="none" stroke="#cdbcd1" stroke-width="0.8" stroke-linejoin="round" /><path d="M89.1 580.0 L79.7 589.3 L77.3 605.7 L93.7 629.2 L105.5 640.9 L114.8 652.6 L126.6 652.6 L140.6 652.6" fill="none" stroke="#cdbcd1" stroke-width="0.8" stroke-linejoin="round" /><path d="M0.0 598.7 L16.4 596.4 L28.1 598.7 L49.2 601.1 L65.6 603.4 L75.0 608.1 L84.4 615.1" fill="none" stroke="#cdbcd1" stroke-width="0.8" stroke-linejoin="round" /><path d="M68.0 603.4 L63.3 624.5 L53.9 645.6 L49.2 655.0" fill="none" stroke="#cdbcd1" stroke-width="0.8" stroke-linejoin="round" /><path d="M16.4 596.4 L14.1 587.0 L18.7 577.6 L14.1 568.2 L0.0 570.6" fill="none" stroke="#cdbcd1" stroke-width="0.8" stroke-linejoin="round" /><path d="M0.0 638.6 L18.7 636.2 L30.5 643.2 L46.9 652.6" fill="none" stroke="#cdbcd1" stroke-width="0.8" stroke-linejoin="round" /><path d="M23.4 624.5 L18.7 640.9 L14.1 647.9 L0.0 652.6" fill="none" stroke="#cdbcd1" stroke-width="0.8" stroke-linejoin="round" /><path d="M89.1 673.7 L86.7 694.8 L93.7 713.6 L96.1 732.1" fill="none" stroke="#cdbcd1" stroke-width="0.8" stroke-linejoin="round" /><path d="M171.1 662.0 L185.2 680.7 L182.8 699.5 L199.2 713.6 L201.6 722.9 L192.2 732.1" fill="none" stroke="#cdbcd1" stroke-width="0.8" stroke-linejoin="round" /><path d="M0.0 718.2 L39.8 718.2 L70.3 706.5 L86.7 694.8" fill="none" stroke="#cdbcd1" stroke-width="0.8" stroke-linejoin="round" /><path d="M239.1 680.7 L239.1 694.8 L257.8 706.5 L271.9 699.5 L290.6 706.5 L288.3 732.1" fill="none" stroke="#cdbcd1" stroke-width="0.8" stroke-linejoin="round" /><path d="M206.2 713.6 L234.4 694.8 L239.1 680.7" fill="none" stroke="#cdbcd1" stroke-width="0.8" stroke-linejoin="round" /><path d="M294.0 529.6 L317.4 523.7 L326.8 516.7 L329.2 512.0" fill="none" stroke="#cdbcd1" stroke-width="0.8" stroke-linejoin="round" /><path d="M326.8 519.0 L331.5 540.1 L338.5 549.5 L336.2 563.6 L326.8 577.6 L326.8 591.7 L331.5 601.1 L340.9 605.7" fill="none" stroke="#cdbcd1" stroke-width="0.8" stroke-linejoin="round" /><path d="M338.5 547.2 L364.3 549.5 L383.1 561.2 L394.8 561.2 L413.5 562.4 L420.6 577.6 L432.3 570.6 L455.7 558.9 L479.2 556.5 L486.2 540.1 L472.1 526.1 L474.5 512.0" fill="none" stroke="#cdbcd1" stroke-width="0.8" stroke-linejoin="round" /><path d="M432.3 572.9 L437.0 603.4 L448.7 615.1 L458.1 624.5 L460.4 638.6 L465.1 643.2 L476.8 643.2 L479.2 652.6 L488.5 662.0 L493.2 676.1 L492.0 685.4" fill="none" stroke="#cdbcd1" stroke-width="0.8" stroke-linejoin="round" /><path d="M437.0 603.4 L420.6 610.4 L408.8 619.8 L397.1 612.8 L392.4 605.7 L376.0 615.1 L359.6 619.8" fill="none" stroke="#cdbcd1" stroke-width="0.8" stroke-linejoin="round" /><path d="M458.1 624.5 L455.7 650.3 L434.6 662.0 L427.6 666.7 L429.9 676.1" fill="none" stroke="#cdbcd1" stroke-width="0.8" stroke-linejoin="round" /><path d="M479.2 556.5 L486.2 572.9 L481.5 582.3 L479.2 605.7 L483.8 622.2 L481.5 650.3 L474.5 657.3" fill="none" stroke="#cdbcd1" stroke-width="0.8" stroke-linejoin="round" /><path d="M481.5 582.3 L500.2 591.7 L509.6 605.7 L516.7 624.5 L504.9 643.2 L500.2 647.9 L519.0 652.6 L540.1 643.2 L547.1 626.8 L570.6 619.8 L589.3 626.8 L594.0 629.2" fill="none" stroke="#cdbcd1" stroke-width="0.8" stroke-linejoin="round" /><path d="M587.0 535.4 L579.9 558.9 L572.9 582.3 L561.2 605.7 L570.6 617.5" fill="none" stroke="#cdbcd1" stroke-width="0.8" stroke-linejoin="round" /><path d="M308.1 633.9 L310.4 657.3 L308.1 671.4 L294.0 673.7" fill="none" stroke="#cdbcd1" stroke-width="0.8" stroke-linejoin="round" /><path d="M312.7 664.3 L322.1 680.7 L343.2 676.1 L352.6 683.1 L364.3 685.4 L364.3 666.7 L371.3 657.3" fill="none" stroke="#cdbcd1" stroke-width="0.8" stroke-linejoin="round" /><path d="M352.6 683.1 L343.2 699.5 L347.9 732.1" fill="none" stroke="#cdbcd1" stroke-width="0.8" stroke-linejoin="round" /><path d="M397.1 680.7 L404.2 699.5 L415.9 706.5 L418.2 732.1" fill="none" stroke="#cdbcd1" stroke-width="0.8" stroke-linejoin="round" /><path d="M497.9 690.1 L509.6 711.2 L504.9 732.1" fill="none" stroke="#cdbcd1" stroke-width="0.8" stroke-linejoin="round" /><path d="M512.0 706.5 L533.1 711.2 L551.8 706.5 L558.8 690.1" fill="none" stroke="#cdbcd1" stroke-width="0.8" stroke-linejoin="round" /><path d="M533.1 711.2 L535.4 732.1" fill="none" stroke="#cdbcd1" stroke-width="0.8" stroke-linejoin="round" /><path d="M96.9 722.0 L98.4 734.5 L109.4 745.4 L115.6 761.1 L117.2 765.8" fill="none" stroke="#cdbcd1" stroke-width="0.8" stroke-linejoin="round" /><path d="M140.6 757.9 L148.4 745.4 L159.4 734.5 L168.8 723.6 L182.8 732.9 L190.6 734.5 L201.6 722.0" fill="none" stroke="#cdbcd1" stroke-width="0.8" stroke-linejoin="round" /><path d="M190.6 734.5 L210.9 743.9 L234.4 753.2 L300.0 754.8" fill="none" stroke="#cdbcd1" stroke-width="0.8" stroke-linejoin="round" /><path d="M234.4 753.2 L237.5 768.9 L243.8 787.6 L239.1 803.2 L221.9 812.6" fill="none" stroke="#cdbcd1" stroke-width="0.8" stroke-linejoin="round" /><path d="M257.8 754.8 L264.1 781.4 L262.5 797.0 L273.4 807.9 L281.2 804.8 L300.0 809.5" fill="none" stroke="#cdbcd1" stroke-width="0.8" stroke-linejoin="round" /><path d="M282.8 722.0 L282.8 753.2" fill="none" stroke="#cdbcd1" stroke-width="0.8" stroke-linejoin="round" /><path d="M6.2 722.0 L20.3 723.6 L28.1 742.3 L23.4 743.9 L35.9 751.7" fill="none" stroke="#cdbcd1" stroke-width="0.8" stroke-linejoin="round" /><path d="M137.5 806.4 L148.4 812.6 L156.2 822.0 L165.6 831.4 L176.6 842.3 L192.2 856.4 L196.9 861.1" fill="none" stroke="#cdbcd1" stroke-width="0.8" stroke-linejoin="round" /><path d="M67.2 825.1 L87.5 811.1 L100.0 825.1" fill="none" stroke="#cdbcd1" stroke-width="0.8" stroke-linejoin="round" /><path d="M210.9 790.8 L221.9 803.2 L220.3 812.6 L228.1 829.8 L243.8 831.4 L253.1 834.5" fill="none" stroke="#cdbcd1" stroke-width="0.8" stroke-linejoin="round" /><path d="M9.4 776.7 L15.6 781.4 L17.2 790.8 L20.3 800.1 L26.6 815.8 L34.4 831.4" fill="none" stroke="#cdbcd1" stroke-width="0.8" stroke-linejoin="round" /><path d="M39.1 753.2 L54.7 740.8 L71.9 743.9 L70.3 757.9 L51.6 767.3 L39.1 768.9 L37.5 775.1 L46.9 786.1 L54.7 801.7 L65.6 807.9 L67.2 818.9 L67.2 828.2" fill="none" stroke="#cdbcd1" stroke-width="0.8" stroke-linejoin="round" /><path d="M294.0 754.8 L308.1 754.8" fill="none" stroke="#cdbcd1" stroke-width="0.8" stroke-linejoin="round" /><path d="M337.8 745.4 L339.3 764.2 L353.4 786.1 L386.2 789.2" fill="none" stroke="#cdbcd1" stroke-width="0.8" stroke-linejoin="round" /><path d="M344.0 722.0 L345.6 732.9 L361.2 732.9 L379.9 740.8 L400.2 745.4" fill="none" stroke="#cdbcd1" stroke-width="0.8" stroke-linejoin="round" /><path d="M497.1 722.0 L515.9 742.3 L509.6 745.4" fill="none" stroke="#cdbcd1" stroke-width="0.8" stroke-linejoin="round" /><path d="M533.1 725.1 L542.4 740.8 L531.5 759.5 L529.9 768.9" fill="none" stroke="#cdbcd1" stroke-width="0.8" stroke-linejoin="round" /><path d="M587.8 722.0 L581.5 745.4 L590.9 761.1 L583.1 807.9" fill="none" stroke="#cdbcd1" stroke-width="0.8" stroke-linejoin="round" /><path d="M565.9 806.4 L562.8 818.9 L533.1 836.1 L523.7 861.1" fill="none" stroke="#cdbcd1" stroke-width="0.8" stroke-linejoin="round" /><path d="M576.8 806.4 L584.6 823.6 L594.0 837.6" fill="none" stroke="#cdbcd1" stroke-width="0.8" stroke-linejoin="round" /><path d="M294.0 806.4 L306.5 801.7 L325.2 801.7 L356.5 803.2 L372.1 806.4 L383.1 812.6" fill="none" stroke="#cdbcd1" stroke-width="0.8" stroke-linejoin="round" /><path d="M294.0 815.8 L309.6 812.6 L333.1 811.1 L340.9 822.0 L345.6 831.4" fill="none" stroke="#cdbcd1" stroke-width="0.8" stroke-linejoin="round" /><path d="M294.0 840.8 L312.8 831.4 L328.4 837.6 L340.9 834.5 L345.6 831.4" fill="none" stroke="#cdbcd1" stroke-width="0.8" stroke-linejoin="round" /><path d="M300.0 610.4 L293.0 605.7 L278.9 605.7 L276.6 587.0 L253.1 584.7 L246.1 591.7 L222.7 598.7 L189.8 608.1 L166.4 611.6 L164.1 619.8 L173.4 629.2 L164.1 638.6 L154.7 647.9 L164.1 657.3 L171.1 662.0 L168.7 671.4 L152.3 676.1 L135.9 666.7 L112.5 669.0 L98.4 673.7 L91.4 669.0 L79.7 659.7 L68.0 655.0 L49.2 655.0 L35.2 669.0 L23.4 676.1 L23.4 685.4 L16.4 683.1 L9.4 676.1 L4.7 690.1 L2.3 713.6 L9.4 722.9 L23.4 732.1" fill="none" stroke="#bfa7c6" stroke-width="1.4" stroke-linejoin="round" /><path d="M294.0 610.4 L308.1 612.8 L305.7 622.2 L317.4 619.8 L329.2 612.8 L340.9 605.7 L345.6 604.6 L340.9 610.4 L357.3 624.5 L371.3 647.9 L381.9 672.5 L387.7 664.3 L394.8 669.0 L401.8 671.4 L418.2 667.9 L429.9 676.1 L439.3 690.1 L455.7 692.5 L458.1 690.1 L462.7 699.5 L472.1 699.5 L490.9 687.8 L504.9 678.4 L521.3 671.4 L542.4 674.9 L549.5 685.4 L575.2 689.0 L587.0 680.7 L584.6 664.3 L594.0 652.6" fill="none" stroke="#bfa7c6" stroke-width="1.4" stroke-linejoin="round" /><path d="M462.7 699.5 L472.1 706.5 L479.2 715.9 L497.9 727.6 L500.2 732.1" fill="none" stroke="#bfa7c6" stroke-width="1.4" stroke-linejoin="round" /><path d="M458.1 701.8 L446.3 713.6 L444.0 732.1" fill="none" stroke="#bfa7c6" stroke-width="1.4" stroke-linejoin="round" /><path d="M379.9 772.0 L387.8 768.9 L401.8 764.2 L409.6 767.3 L406.5 757.9 L415.9 734.5 L444.0 737.6 L445.6 722.0" fill="none" stroke="#bfa7c6" stroke-width="1.4" stroke-linejoin="round" /><path d="M379.9 772.0 L386.2 776.7 L387.8 792.3 L389.3 800.1 L384.6 807.9 L383.1 817.3 L364.3 825.1 L345.6 831.4 L333.1 840.8 L322.1 843.9 L312.8 854.8 L309.6 861.1" fill="none" stroke="#bfa7c6" stroke-width="1.4" stroke-linejoin="round" /><path d="M492.4 722.0 L506.5 740.8 L503.4 765.8 L531.5 770.4 L556.5 782.9 L567.4 806.4 L594.0 807.9" fill="none" stroke="#bfa7c6" stroke-width="1.4" stroke-linejoin="round" /><path d="M107.8 861.1 L107.8 770.4 L137.5 761.1 L156.2 772.0 L167.2 781.4 L178.1 793.9 L210.9 790.8" fill="none" stroke="#bfa7c6" stroke-width="1.4" stroke-linejoin="round" /><path d="M257.8 310.7 L227.3 317.8 L220.3 331.8 L215.6 352.9 L218.0 371.7 L219.1 390.4 L210.9 413.9 L225.0 427.9 L236.7 439.7 L248.4 460.7 L281.2 460.7" fill="none" stroke="#c0dfe8" stroke-width="0.8" stroke-linejoin="round" /><path d="M63.3 350.6 L68.0 338.9 L65.6 310.7" fill="none" stroke="#c0dfe8" stroke-width="0.8" stroke-linejoin="round" /><path d="M75.0 352.9 L89.1 348.2 L98.4 334.2 L105.5 327.2" fill="none" stroke="#c0dfe8" stroke-width="0.8" stroke-linejoin="round" /><path d="M112.5 324.8 L119.5 336.5 L133.6 331.8 L145.3 320.1 L154.7 322.5 L173.4 320.1" fill="none" stroke="#c0dfe8" stroke-width="0.8" stroke-linejoin="round" /><path d="M453.4 292.0 L455.7 306.1 L453.4 317.8 L465.1 324.8 L472.1 338.9 L467.4 374.0 L462.7 404.5 L476.8 418.6 L486.2 437.3 L493.2 449.0 L488.5 456.1 L495.6 474.8 L504.9 493.6 L516.7 512.1" fill="none" stroke="#c0dfe8" stroke-width="0.8" stroke-linejoin="round" /><path d="M354.9 292.0 L357.3 306.1 L359.6 327.2 L362.0 338.9 L357.3 357.6 L350.2 371.7" fill="none" stroke="#c0dfe8" stroke-width="0.8" stroke-linejoin="round" /><path d="M424.1 203.9 L429.9 227.3 L446.3 222.6 L451.0 234.3 L448.7 246.1 L455.7 269.5 L455.7 302.1" fill="none" stroke="#c0dfe8" stroke-width="0.8" stroke-linejoin="round" /><path d="M446.3 82.0 L458.1 105.4 L476.8 103.1 L481.5 96.1 L504.9 96.1 L512.0 117.2 L500.2 128.9 L495.6 152.3 L486.2 164.0 L490.9 175.7 L519.0 171.1" fill="none" stroke="#c0dfe8" stroke-width="0.8" stroke-linejoin="round" /><path d="M540.1 185.1 L551.8 192.2 L579.9 182.8 L587.0 171.1 L594.0 171.1" fill="none" stroke="#c0dfe8" stroke-width="0.8" stroke-linejoin="round" /><path d="M476.8 260.1 L504.9 253.1 L516.7 246.1" fill="none" stroke="#c0dfe8" stroke-width="0.8" stroke-linejoin="round" /><path d="M486.2 267.2 L519.0 262.5" fill="none" stroke="#c0dfe8" stroke-width="0.8" stroke-linejoin="round" /><path d="M514.3 281.2 L528.4 264.8 L537.7 262.5" fill="none" stroke="#c0dfe8" stroke-width="0.8" stroke-linejoin="round" /><path d="M533.1 222.6 L542.4 246.1" fill="none" stroke="#c0dfe8" stroke-width="0.8" stroke-linejoin="round" /><path d="M547.1 276.5 L551.8 285.9" fill="none" stroke="#c0dfe8" stroke-width="0.8" stroke-linejoin="round" /><path d="M558.8 276.5 L563.5 288.2" fill="none" stroke="#c0dfe8" stroke-width="0.8" stroke-linejoin="round" /><path d="M103.1 516.7 L110.2 512.0" fill="none" stroke="#c0dfe8" stroke-width="0.8" stroke-linejoin="round" /><path d="M100.8 535.4 L103.1 544.8 L91.4 549.5 L86.7 556.5" fill="none" stroke="#c0dfe8" stroke-width="0.8" stroke-linejoin="round" /><path d="M504.9 594.0 L521.3 582.3 L523.7 575.3" fill="none" stroke="#c0dfe8" stroke-width="0.8" stroke-linejoin="round" /><path d="M507.3 596.4 L514.3 612.8 L512.0 629.2" fill="none" stroke="#c0dfe8" stroke-width="0.8" stroke-linejoin="round" /></svg><div style="position:absolute;left:121.0px;top:1.0px;white-space:nowrap;font-size:12.3px;line-height:14px;font-style:italic;font-size:10px;color:#222;line-height:12px">Северный</div><div style="position:absolute;left:66.0px;top:131.0px;white-space:nowrap;font-size:12.3px;line-height:14px;font-style:italic;font-size:10px;color:#222;line-height:12px;text-align:center">Южный<br>остров</div><div style="position:absolute;left:13.0px;top:14.0px;width:58.0px;height:33.0px;background:#146a8e;border-radius:2px"></div><svg style="position:absolute;left:22.0px;top:24.0px" width="15" height="12" viewBox="0 0 15 12"><path d="M1 6C3 2.5 5 1.2 7.5 1.2S12 2.5 14 6C12 9.5 10 10.8 7.5 10.8S3 9.5 1 6Z" fill="none" stroke="#fff" stroke-width="1.3"/><circle cx="7.5" cy="6" r="2.6" fill="none" stroke="#fff" stroke-width="1.3"/></svg><div style="position:absolute;left:39.5px;top:23.5px;white-space:nowrap;font-size:12.3px;line-height:14px;font-weight:700;font-size:11px;color:#fff">Вид</div><div style="position:absolute;left:76.0px;top:14.0px;width:101.0px;height:33.0px;background:#fff;border-radius:2px"></div><div style="position:absolute;left:182.0px;top:14.0px;width:71.0px;height:33.0px;background:#fff;border-radius:2px"></div><div style="position:absolute;left:258.0px;top:14.0px;width:98.0px;height:33.0px;background:#fff;border-radius:2px"></div><div style="position:absolute;left:361.0px;top:14.0px;width:132.0px;height:33.0px;background:#fff;border-radius:2px"></div><svg style="position:absolute;left:86.0px;top:23.0px" width="15" height="15" viewBox="0 0 15 15"><path d="M1.5 12L11 2.5L13.5 5L4 14.5Z" fill="none" stroke="#2a7a9e" stroke-width="1.1"/></svg><div style="position:absolute;left:102.8px;top:23.5px;white-space:nowrap;font-size:12.3px;line-height:14px;color:#2a7a9e">Измерения</div><svg style="position:absolute;left:191.0px;top:23.0px" width="15" height="15" viewBox="0 0 15 15"><circle cx="6.3" cy="6.3" r="4.8" fill="none" stroke="#2a7a9e" stroke-width="1.3"/><path d="M9.8 9.8L13.5 13.5" stroke="#2a7a9e" stroke-width="1.5"/></svg><div style="position:absolute;left:208.2px;top:23.5px;white-space:nowrap;font-size:12.3px;line-height:14px;color:#2a7a9e">Поиск</div><svg style="position:absolute;left:269.0px;top:24.0px" width="13" height="12" viewBox="0 0 13 12"><rect x="0.6" y="0.6" width="11.8" height="10.8" rx="1" fill="none" stroke="#2a7a9e" stroke-width="1.2"/><path d="M1 10L4.5 6L7 8.5L9 6.5L12 10V11H1Z" fill="#2a7a9e"/><circle cx="4" cy="3.8" r="1.3" fill="#2a7a9e"/><rect x="1" y="9" width="11" height="2.4" fill="#2a7a9e"/></svg><div style="position:absolute;left:285.0px;top:23.5px;white-space:nowrap;font-size:12.3px;line-height:14px;color:#2a7a9e">Рисование</div><svg style="position:absolute;left:371.0px;top:23.0px" width="15" height="15" viewBox="0 0 15 15"><path d="M2 14L2.6 10.6L10.8 2.4C11.4 1.8 12.3 1.8 12.9 2.4L13.6 3.1C14.2 3.7 14.2 4.6 13.6 5.2L5.4 13.4Z M9.6 3.6L12.4 6.4" fill="none" stroke="#2a7a9e" stroke-width="1.2"/></svg><div style="position:absolute;left:387.7px;top:23.5px;white-space:nowrap;font-size:12.3px;line-height:14px;color:#2a7a9e">Редактирование</div><div style="position:absolute;left:511.0px;top:14.0px;width:32.0px;height:31.0px;background:#fff;border-radius:2px"></div><svg style="position:absolute;left:519.0px;top:22.0px" width="16" height="15" viewBox="0 0 16 15"><path d="M4 5V1.2H12V5 M3 11.5H1.2V6.5C1.2 5.6 1.8 5 2.7 5H13.3C14.2 5 14.8 5.6 14.8 6.5V11.5H13 M4 9H12V13.8H4Z" fill="none" stroke="#444" stroke-width="1.2"/></svg><div style="position:absolute;left:548.0px;top:14.0px;width:33.0px;height:31.0px;background:#fff;border-radius:2px"></div><svg style="position:absolute;left:555.0px;top:21.0px" width="19" height="17" viewBox="0 0 17 15"><path d="M8 1.2L9.3 1.4L9.6 3.1L10.8 3.6L12.2 2.6L13.2 3.6L12.3 5L12.8 6.3L14.5 6.6V8.1L12.8 8.4L12.3 9.6L13.3 11L12.3 12L10.9 11.1L9.6 11.6L9.3 13.3H7.9L7.6 11.6L6.3 11.1L4.9 12L3.9 11L4.8 9.6L4.3 8.4L2.6 8.1V6.6L4.3 6.3L4.8 5L3.9 3.6L4.9 2.6L6.3 3.6L7.6 3.1L7.9 1.4Z" fill="none" stroke="#555" stroke-width="0.9" stroke-linejoin="round"/><circle cx="8.6" cy="7.35" r="2.3" fill="none" stroke="#555" stroke-width="0.9"/></svg><div style="position:absolute;left:13.6px;top:52.3px;width:42.9px;height:29.1px;background:#fff;border:1px solid #cfcfcf;border-radius:1px"></div><div style="position:absolute;left:62.4px;top:52.3px;width:31.0px;height:29.1px;background:#fff;border:1px solid #cfcfcf;border-radius:1px"></div><div style="position:absolute;left:99.5px;top:52.3px;width:31.9px;height:29.1px;background:#fff;border:1px solid #cfcfcf;border-radius:1px"></div><div style="position:absolute;left:137.6px;top:52.3px;width:30.5px;height:29.1px;background:#fff;border:1px solid #cfcfcf;border-radius:1px"></div><svg style="position:absolute;left:21.0px;top:59.0px" width="18" height="16" viewBox="0 0 18 16"><path d="M8 8.5L1 5L8 1.5L15 5Z" fill="#444"/><path d="M1 8L8 11.5L15 8" fill="none" stroke="#444" stroke-width="1.4"/><path d="M1 11L8 14.5L15 11" fill="none" stroke="#444" stroke-width="1.4"/></svg><div style="position:absolute;left:40.0px;top:65.0px;width:8.0px;height:0.0px;border-left:4px solid transparent;border-right:4px solid transparent;border-top:4px solid #444;width:0;height:0"></div><svg style="position:absolute;left:70.0px;top:59.0px" width="16" height="16" viewBox="0 0 16 16"><path d="M9.5 1.5H14.5V6.5 M14.5 1.5L9 7 M6.5 14.5H1.5V9.5 M1.5 14.5L7 9" fill="none" stroke="#444" stroke-width="1.1"/></svg><svg style="position:absolute;left:107.0px;top:59.0px" width="17" height="16" viewBox="0 0 17 16"><path d="M2.5 10.5L9 4C9.8 3.2 11 3.2 11.8 4L14 6.2C14.8 7 14.8 8.2 14 9L8.5 14.5H5L2.5 12C2 11.5 2 11 2.5 10.5Z M6 7L11 12" fill="none" stroke="#444" stroke-width="1.1"/></svg><svg style="position:absolute;left:145.0px;top:59.0px" width="16" height="16" viewBox="0 0 16 16"><path d="M1.5 5.5V1.5H5.5 M1.5 1.5L5.5 5.5 M10.5 1.5H14.5V5.5 M14.5 1.5L10.5 5.5 M1.5 10.5V14.5H5.5 M1.5 14.5L5.5 10.5 M10.5 14.5H14.5V10.5 M14.5 14.5L10.5 10.5" fill="none" stroke="#444" stroke-width="1.1"/></svg><div style="position:absolute;left:8.0px;top:813.0px;width:110.0px;height:15.0px;border-left:1px solid #777;border-right:1px solid #777;border-bottom:1px solid #777"></div><div style="position:absolute;left:48.0px;top:815.0px;white-space:nowrap;font-size:12.3px;line-height:14px;font-size:9.5px;color:#777;line-height:11px">500 km</div><div style="position:absolute;left:1.0px;top:811.0px;white-space:nowrap;font-size:12.3px;line-height:14px;font-size:9.5px;color:#777;line-height:11px">m</div><div style="position:absolute;left:99.0px;top:856.0px;white-space:nowrap;font-size:12.3px;line-height:14px;font-size:11.5px;color:#6b4b7a;letter-spacing:0.3px;line-height:13px">Türkmenistan</div><div style="position:absolute;left:6.0px;top:832.0px;width:158.0px;height:27.0px;background:rgba(255,255,255,0.72);border:1px solid #e6e6e6"></div><div style="position:absolute;left:78.0px;top:832.0px;width:1.0px;height:27.0px;background:#ddd"></div><div style="position:absolute;left:12.0px;top:839.0px;white-space:nowrap;font-size:12.3px;line-height:14px;color:#555">Масштаб 1:</div><div style="position:absolute;left:86.0px;top:839.0px;white-space:nowrap;font-size:12.3px;line-height:14px;color:#333">17165700</div><div style="position:absolute;left:198.0px;top:706.0px;white-space:nowrap;font-size:12.3px;line-height:14px;font-size:11.5px;color:#6b4b7a;letter-spacing:0.3px;line-height:13px">Қазақстан</div><div style="position:absolute;left:299.0px;top:788.0px;white-space:nowrap;font-size:12.3px;line-height:14px;font-size:11.5px;color:#222;line-height:13px">Бишкек</div><svg style="position:absolute;left:315.0px;top:800.0px" width="7" height="7" viewBox="0 0 7 7"><circle cx="3.5" cy="3.5" r="2.6" fill="none" stroke="#333" stroke-width="1"/><circle cx="3.5" cy="3.5" r="1" fill="#333"/></svg><div style="position:absolute;left:158.0px;top:818.0px;white-space:nowrap;font-size:12.3px;line-height:14px;font-size:11.5px;color:#6b4b7a;letter-spacing:0.3px;line-height:13px">O‘zbekiston</div><div style="position:absolute;left:289.0px;top:822.0px;white-space:nowrap;font-size:12.3px;line-height:14px;font-size:11.5px;color:#6b4b7a;letter-spacing:0.3px;line-height:13px">Кыргызстан</div><div style="position:absolute;left:452.0px;top:759.0px;white-space:nowrap;font-size:12.3px;line-height:14px;font-size:11px;color:#222;line-height:14px;text-align:center">乌鲁木<br>齐市</div><svg style="position:absolute;left:466.0px;top:786.0px" width="5" height="5" viewBox="0 0 5 5"><circle cx="2.5" cy="2.5" r="1.8" fill="none" stroke="#333" stroke-width="0.8"/></svg></div>
</body></html>
